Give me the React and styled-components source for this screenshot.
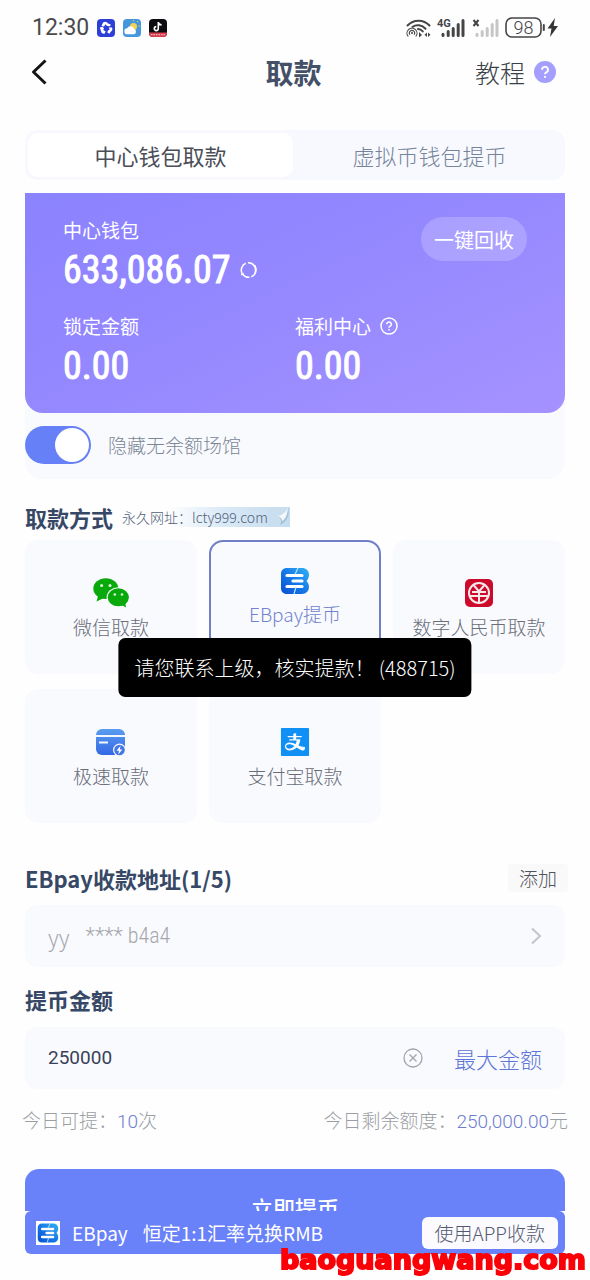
import React, { useState } from 'react';
import styled, { createGlobalStyle, css } from 'styled-components';
import { AiFillAlipaySquare } from 'react-icons/ai';

const Global = createGlobalStyle`
  *, *::before, *::after { box-sizing: border-box; }
  body {
    margin: 0;
    background: #fefefe;
    font-family: 'Noto Sans CJK SC', 'Noto Sans', sans-serif;
    font-weight: 300;
  }
  button, input { font: inherit; color: inherit; margin: 0; padding: 0; border: 0; background: none; }
  h1, h2, p { margin: 0; }
`;

const numeric = css`font-family: Roboto, 'Noto Sans CJK SC', sans-serif;`;
const narrow = css`font-family: 'Liberation Sans Narrow', 'Roboto Condensed', 'Noto Sans CJK SC', sans-serif;`;

const Page = styled.div`
  min-height: 100vh;
  display: flex;
  flex-direction: column;
`;

const StatusBar = styled.div`
  display: flex;
  align-items: center;
  justify-content: space-between;
  height: 56px;
  padding: 0 31px 0 32px;
`;
const StatusGroup = styled.div`
  display: flex;
  align-items: center;
  gap: ${p => p.$gap}px;
  svg { display: block; }
`;
const Clock = styled.span`
  ${numeric}
  font-size: 23px;
  line-height: 28px;
  font-weight: 400;
  color: #4a4a4c;
`;

const Header = styled.header`
  display: grid;
  grid-template-columns: 1fr auto 1fr;
  align-items: center;
  height: 32px;
  padding: 0 34px 0 31px;
`;
const BackButton = styled.button`
  justify-self: start;
  display: flex;
  cursor: pointer;
`;
const Title = styled.h1`
  font-size: 28px;
  line-height: 32px;
  font-weight: 700;
  color: #435067;
`;
const TutorialLink = styled.a`
  justify-self: end;
  display: flex;
  align-items: center;
  gap: 9px;
  font-size: 25px;
  line-height: 32px;
  color: #3b3f48;
  text-decoration: none;
`;

const Main = styled.main`
  display: flex;
  flex-direction: column;
  padding: 42px 25px 0;
`;

const Tabs = styled.div`
  display: grid;
  grid-template-columns: 1fr 1fr;
  height: 50px;
  padding: 3px;
  gap: 4px;
  border-radius: 12px;
  background: #f8f9fe;
`;
const Tab = styled.button`
  border-radius: 10px;
  font-size: 22px;
  line-height: 32px;
  cursor: pointer;
  font-weight: ${p => (p.$active ? 400 : 300)};
  color: ${p => (p.$active ? '#4a4e58' : '#75849a')};
  background: ${p => (p.$active ? '#ffffff' : 'transparent')};
`;

const WalletPanel = styled.section`
  margin-top: 13px;
  border-radius: 0 0 18px 18px;
  background: #f9fafe;
`;
const WalletCard = styled.div`
  display: flex;
  flex-direction: column;
  gap: 19px;
  padding: 24px 38px 23px;
  border-radius: 0 0 18px 18px;
  background: linear-gradient(155deg, #8b82fe 0%, #9488ff 45%, #a592ff 100%);
  color: #ffffff;
`;
const WalletTop = styled.div`
  display: flex;
  justify-content: space-between;
  align-items: flex-start;
`;
const WalletColumns = styled.div`
  display: grid;
  grid-template-columns: 1fr 1fr;
`;
const FigureLabel = styled.p`
  display: flex;
  align-items: center;
  gap: 9px;
  font-size: 19px;
  line-height: 26px;
  font-weight: 400;
`;
const Figure = styled.p`
  ${narrow}
  display: flex;
  align-items: center;
  gap: 9px;
  margin-top: 3px;
  font-size: 38px;
  line-height: 48px;
  font-weight: 400;
  -webkit-text-stroke: 1px #ffffff;
`;
const RefreshButton = styled.button`
  display: flex;
  cursor: pointer;
`;
const CollectButton = styled.button`
  height: 44px;
  padding: 0 13px;
  border-radius: 22px;
  background: rgba(255, 255, 255, 0.2);
  font-size: 20px;
  font-weight: 400;
  cursor: pointer;
`;
const SwitchRow = styled.label`
  display: flex;
  align-items: flex-start;
  gap: 17px;
  height: 66px;
  padding-top: 13px;
  font-size: 19px;
  line-height: 38px;
  color: #7c8796;
  cursor: pointer;
`;
const Switch = styled.input`
  appearance: none;
  display: flex;
  align-items: center;
  justify-content: flex-start;
  width: 66px;
  height: 38px;
  padding: 0 2px;
  border-radius: 19px;
  background: #c9cfdd;
  cursor: pointer;
  &::before {
    content: '';
    width: 34px;
    height: 34px;
    border-radius: 50%;
    background: #ffffff;
  }
  &:checked { background: #6681f8; justify-content: flex-end; }
`;

const SectionHead = styled.div`
  display: flex;
  align-items: center;
  justify-content: ${p => (p.$spread ? 'space-between' : 'flex-start')};
  gap: 9px;
  margin-top: ${p => p.$top}px;
`;
const SectionTitle = styled.h2`
  font-size: 22px;
  line-height: 30px;
  font-weight: 700;
  color: #374866;
`;
const SiteNote = styled.span`
  display: flex;
  align-items: center;
  font-size: 14px;
  line-height: 18px;
  color: #52627b;
  background: linear-gradient(90deg, rgba(213, 230, 244, 0) 28%, #dae9f6 60%, #c4dcef 100%);
`;

const Methods = styled.div`
  display: grid;
  grid-template-columns: repeat(3, 1fr);
  gap: 15px 12px;
  margin-top: 8px;
`;
const Method = styled.button`
  display: flex;
  flex-direction: column;
  align-items: center;
  justify-content: center;
  gap: 5px;
  height: 134px;
  padding: ${p => (p.$active ? '0 0 20px' : '4px 0 0')};
  border: ${p => (p.$active ? '2px solid #7080c8' : '0')};
  border-radius: 14px;
  background: #f9fafe;
  color: ${p => (p.$active ? '#7283cd' : '#696d78')};
  font-size: 19px;
  line-height: 28px;
  cursor: pointer;
  svg { display: block; }
`;

const AddButton = styled.button`
  margin-right: -3px;
  padding: 0 11px;
  border-radius: 4px;
  background: #f9f9fa;
  font-size: 19px;
  line-height: 28px;
  color: #50545c;
  cursor: pointer;
`;
const Field = styled.div`
  display: flex;
  align-items: center;
  height: 62px;
  margin-top: ${p => p.$top}px;
  padding: 0 23px;
  border-radius: 12px;
  background: #f9fafe;
`;
const AddressButton = styled.button`
  flex: 1;
  display: flex;
  align-items: center;
  gap: 16px;
  color: #a6a6ac;
  text-align: left;
  cursor: pointer;
  svg { margin-left: auto; }
`;
const Owner = styled.span`
  font-size: 22px;
  line-height: 32px;
`;
const Address = styled.span`
  ${narrow}
  font-size: 22px;
  line-height: 32px;
`;
const AmountInput = styled.input`
  ${numeric}
  flex: 1;
  min-width: 0;
  font-size: 19px;
  line-height: 28px;
  font-weight: 400;
  color: #39415a;
  outline: 0;
`;
const ClearButton = styled.button`
  display: flex;
  margin-right: 31px;
  cursor: pointer;
`;
const MaxButton = styled.button`
  font-size: 22px;
  line-height: 32px;
  color: #6076d6;
  cursor: pointer;
`;
const Limits = styled.div`
  display: flex;
  justify-content: space-between;
  margin: 17px -3px 0;
  font-size: 19px;
  line-height: 28px;
  color: #9b9ea5;
`;
const Value = styled.span`
  ${numeric}
  color: #6b7dcf;
`;
const Submit = styled.button`
  height: 76px;
  margin-top: 33px;
  border-radius: 14px;
  background: #6a82f9;
  color: #ffffff;
  font-size: 22px;
  font-weight: 500;
  cursor: pointer;
`;

const PromoDock = styled.aside`
  position: fixed;
  left: 0;
  right: 0;
  bottom: 0;
  padding: 0 25px 26px;
  background: #fefefe;
`;
const Promo = styled.div`
  display: flex;
  align-items: center;
  height: 43px;
  padding: 0 7px 0 11px;
  border-radius: 6px;
  background: #6a82f9;
  color: #ffffff;
  font-size: 19px;
  line-height: 28px;
  font-weight: 400;
`;
const PromoLogo = styled.span`
  display: flex;
  padding: 1px;
  margin-right: 12px;
  background: #ffffff;
`;
const PromoText = styled.p`
  flex: 1;
  display: flex;
  gap: 15px;
`;
const PromoButton = styled.button`
  padding: 0 13px;
  height: 32px;
  border-radius: 6px;
  background: #fafaff;
  color: #555b6e;
  font-weight: 300;
  cursor: pointer;
`;

const Toast = styled.div`
  position: fixed;
  top: 638px;
  left: 50%;
  transform: translateX(-50%);
  padding: 15px 16px 14px;
  border-radius: 7px;
  background: #000000;
  color: #ffffff;
  font-size: 20px;
  line-height: 30px;
  white-space: nowrap;
`;
const Watermark = styled.div`
  position: fixed;
  right: 4px;
  bottom: 4px;
  font-family: 'DejaVu Sans', sans-serif;
  font-size: 27px;
  line-height: 32px;
  font-weight: 700;
  color: #fb0007;
  -webkit-text-stroke: 2px #fb0007;
`;

const SwirlApp = () => (
  <svg width="18" height="18" viewBox="0 0 18 18">
    <rect width="18" height="18" rx="4" fill="#2d3fd6" />
    <g fill="#fff">
      <path d="M6 3.5c2-1.500 4-.8 5 1l2.600.8-.4 2-3.200-.3L8.500 5.300 7 7.600 4.500 7z" />
      <path d="M2.800 8.500l3-.7 1.200 2-.9 1.200 2.500 1.300-1 2.400c-2 .3-3.600-.8-3.600-2.600z" />
      <path d="M15 8.600c.9 1.800.2 3.400-1.300 4.100l-1.200 2.100-2.200-1.200.6-2.200 1.700-.6-.8-2.200z" />
    </g>
  </svg>
);
const WeatherApp = () => (
  <svg width="18" height="18" viewBox="0 0 18 18">
    <rect width="18" height="18" rx="4" fill="#4597dc" />
    <circle cx="10.500" cy="7.500" r="3.500" fill="#f6d154" />
    <path d="M14 3l1-.8M15.500 7h1.300M10.500 2.300v-1" stroke="#f6d154" />
    <path d="M4.500 15.300a3 3 0 0 1-.3-6 3.800 3.800 0 0 1 7 .7 2.800 2.800 0 0 1-.2 5.300z" fill="#fff" />
  </svg>
);
const NoteApp = () => (
  <svg width="18" height="18" viewBox="0 0 18 18">
    <rect width="18" height="18" rx="4" fill="#0b0b10" />
    <path d="M9.300 3v6.600a2 2 0 1 1-2-2M9.300 3.200c.4 1.600 1.600 2.600 3.300 2.700" fill="none" stroke="#fff" strokeWidth="1.600" />
    <path d="M0 13.500h18v.5a4 4 0 0 1-4 4H4a4 4 0 0 1-4-4z" fill="#d8404f" />
    <path d="M2 15.700h14" stroke="#f6c6ca" strokeDasharray="1.500 1" />
  </svg>
);
const WifiIcon = () => (
  <svg width="25" height="19" viewBox="0 0 25 19" fill="none" stroke="#454547">
    <path d="M1.500 6.500C7.500 0 17.500 0 23.500 6.500" strokeWidth="2" strokeLinecap="round" />
    <path d="M6.500 7.800c4-2.700 9.500-1.800 13 2" strokeWidth="2" strokeLinecap="round" />
    <path d="M12 10c1.800.1 3.500 1 4.800 2.400" strokeWidth="2" strokeLinecap="round" />
    <path d="M2.300 17.500a5 5 0 1 1 7.400 0M4 15.700a2.600 2.600 0 1 1 4 0" strokeWidth="1.100" />
    <circle cx="6" cy="14" r="1" fill="#454547" stroke="none" />
    <path d="M13 13l3 3-3 2.500zM21 13.500v4.500l-2.500-2.200zM22 13.500v4.500l2.500-2.200z" fill="#454547" stroke="none" />
  </svg>
);
const SignalIcon = ({ color, tag }) => (
  <svg width="28" height="20" viewBox="0 0 28 20">
    <g stroke={color} strokeWidth="3" strokeLinecap="round">
      <path d="M6 16.200v1.300M11.200 13.500v4M16.200 10.500v7M21.200 6.500v11M26 2.500v15" />
    </g>
    {tag === '4G' ? (
      <text x="0" y="9" fontFamily="Roboto, sans-serif" fontSize="11" fontWeight="700" fill="#454547">4G</text>
    ) : (
      <path d="M2.500 2l5 6M7.500 2l-5 6" stroke="#454547" strokeWidth="2" />
    )}
  </svg>
);
const BatteryIcon = () => (
  <svg width="54" height="22" viewBox="0 0 54 22">
    <rect x="1" y="1" width="35" height="19" rx="6" fill="none" stroke="#454547" strokeWidth="1.600" />
    <text x="18.500" y="17" textAnchor="middle" fontFamily="Roboto, sans-serif" fontSize="18" fill="#454547">98</text>
    <path d="M38.800 8v5" stroke="#454547" strokeWidth="2" strokeLinecap="round" />
    <path d="M50 1l-7.500 10.500h4L45 20l8-11h-4.300z" fill="#353537" />
  </svg>
);
const BackIcon = () => (
  <svg width="16" height="26" viewBox="0 0 16 26" fill="none" stroke="#141414" strokeWidth="3">
    <path d="M14.500 1.500L2.500 13l12 11.500" strokeLinejoin="round" />
  </svg>
);
const HelpDot = () => (
  <svg width="22" height="22" viewBox="0 0 22 22">
    <circle cx="11" cy="11" r="11" fill="#a49fff" />
    <path d="M8 8.800a3 2.900 0 1 1 4.300 2.500c-1 .5-1.300.9-1.300 1.900M11 15v1.800" fill="none" stroke="#fff" strokeWidth="1.900" />
  </svg>
);
const HelpRing = () => (
  <svg width="18" height="18" viewBox="0 0 18 18" fill="none" stroke="#fff">
    <circle cx="9" cy="9" r="8" strokeWidth="1.500" />
    <path d="M6.700 7.200a2.300 2.200 0 1 1 3.300 2c-.8.400-1 .8-1 1.500M9 12v1.500" strokeWidth="1.500" />
  </svg>
);
const RefreshIcon = () => (
  <svg width="17" height="18" viewBox="0 0 17 18" fill="none" stroke="#fff" strokeWidth="1.500">
    <path d="M2.500 13.200A7 7.300 0 0 1 5.800 2.300M8 1.700a7 7.300 0 0 1 7 10" />
    <path d="M14.800 4.800a7 7.300 0 0 1-3.600 11M9.500 16.300a7 7.300 0 0 1-6.500-3M1 13.500l3-.5M16 5l-2.500 0" />
  </svg>
);
const CurlIcon = () => (
  <svg width="22" height="20" viewBox="0 0 22 20">
    <path d="M0 1h15l5-1c1 7-1 14-8 19H0z" fill="#c9dff0" />
    <path d="M9 9l7 .5L20 0c2 8-1 15-8 18 2-4 1-7-3-9z" fill="#a7c2d6" />
    <path d="M9 9c4 0 9-3 11-9-.5 7-2 12-6 14 0-3-2-4-5-5z" fill="#f2f8fc" />
  </svg>
);
const WechatIcon = () => (
  <svg width="36" height="30" viewBox="0 0 36 30">
    <path d="M5 18l-1.500 5.500L11 20z" fill="#08aa0b" />
    <ellipse cx="12.800" cy="10.600" rx="12.500" ry="10.400" fill="#08aa0b" />
    <ellipse cx="25.300" cy="19.300" rx="11.700" ry="10" fill="#f9fafe" />
    <path d="M27 26l6 3.500-1-6z" fill="#08aa0b" />
    <ellipse cx="25.300" cy="19.300" rx="10.600" ry="9" fill="#08aa0b" />
    <g fill="#d9f5da">
      <circle cx="8.600" cy="7.600" r="1.500" /><circle cx="17" cy="7.600" r="1.500" />
      <circle cx="21.800" cy="16.500" r="1.300" /><circle cx="29" cy="16.500" r="1.300" />
    </g>
  </svg>
);
const EbIcon = ({ width = 30, height = 28, id }) => (
  <svg width={width} height={height} viewBox="0 0 30 28">
    <defs>
      <linearGradient id={id} x1="0" y1="1" x2="1" y2="0">
        <stop offset="0" stopColor="#0a4fd0" />
        <stop offset=".5" stopColor="#1479e8" />
        <stop offset="1" stopColor="#35b4f4" />
      </linearGradient>
    </defs>
    <path d="M7 1h15c4 0 7 2.500 7 6.500 0 3-1 5-2.500 6.500C28 15.500 29 17 29 20c0 4-3 7-7 7H7c-4 0-6-2.500-6-6V7c0-3.500 2-6 6-6z" fill={`url(#${id})`} />
    <path d="M7 8.500h15M13 14h9M7 19.500h15" stroke="#fff" strokeWidth="3.200" strokeLinecap="round" />
    <path d="M18 1l-3 6.500M16 20l-2 7" stroke="#bfe4ff" strokeWidth="1.200" />
  </svg>
);
const DigitalYuanIcon = () => (
  <svg width="30" height="30" viewBox="0 0 30 30">
    <rect x="1" y="1" width="28" height="28" rx="5" fill="#cb0a2c" />
    <g fill="none" stroke="#fbe9ea" strokeWidth="2">
      <circle cx="15" cy="15" r="10" />
      <path d="M10 7.500l5 6 5-6M8 14h14M6 18h18M15 13v12" />
    </g>
  </svg>
);
const CardIcon = () => (
  <svg width="30" height="30" viewBox="0 0 30 30">
    <defs>
      <linearGradient id="card" x1="0" y1="0" x2="0" y2="1">
        <stop offset="0" stopColor="#5a9cf0" />
        <stop offset="1" stopColor="#3468e4" />
      </linearGradient>
    </defs>
    <rect x="0" y="2" width="29" height="26" rx="6" fill="url(#card)" />
    <path d="M0 9h29M3 15.500h9" stroke="#f3f7ff" strokeWidth="2" />
    <circle cx="23.500" cy="23" r="6.500" fill="#f9fafe" />
    <circle cx="23.500" cy="23" r="5.300" fill="#4476e6" />
    <path d="M24.500 18.800l-4 5h2.500l-.7 3.700 4-5h-2.500z" fill="#fff" />
  </svg>
);
const ChevronIcon = () => (
  <svg width="12" height="18" viewBox="0 0 12 18" fill="none" stroke="#c3c5cc" strokeWidth="2">
    <path d="M2 1.500L10 9l-8 7.500" />
  </svg>
);
const ClearIcon = () => (
  <svg width="20" height="20" viewBox="0 0 20 20" fill="none" stroke="#a1a4ac" strokeWidth="1.300">
    <circle cx="10" cy="10" r="9" />
    <path d="M6.500 6.500l7 7M13.500 6.500l-7 7" />
  </svg>
);

const METHODS = [
  { id: 'wechat', label: '微信取款', icon: <WechatIcon /> },
  { id: 'ebpay', label: 'EBpay提币', icon: <EbIcon id="eb-method" /> },
  { id: 'ecny', label: '数字人民币取款', icon: <DigitalYuanIcon /> },
  { id: 'fast', label: '极速取款', icon: <CardIcon /> },
  { id: 'alipay', label: '支付宝取款', icon: <AiFillAlipaySquare size={36} color="#1090f4" style={{ margin: -3 }} /> },
];

export default function App() {
  const [tab, setTab] = useState(0);
  const [method, setMethod] = useState('ebpay');
  const [amount, setAmount] = useState('250000');
  return (
    <Page>
      <Global />
      <StatusBar>
        <StatusGroup $gap={8}>
          <Clock>12:30</Clock>
          <SwirlApp />
          <WeatherApp />
          <NoteApp />
        </StatusGroup>
        <StatusGroup $gap={6}>
          <WifiIcon />
          <SignalIcon color="#454547" tag="4G" />
          <SignalIcon color="#c6c6c8" tag="x" />
          <BatteryIcon />
        </StatusGroup>
      </StatusBar>
      <Header>
        <BackButton aria-label="返回"><BackIcon /></BackButton>
        <Title>取款</Title>
        <TutorialLink href="#tutorial">教程<HelpDot /></TutorialLink>
      </Header>
      <Main>
        <Tabs>
          {['中心钱包取款', '虚拟币钱包提币'].map((name, i) => (
            <Tab key={name} $active={tab === i} onClick={() => setTab(i)}>{name}</Tab>
          ))}
        </Tabs>

        <WalletPanel>
          <WalletCard>
            <WalletTop>
              <div>
                <FigureLabel>中心钱包</FigureLabel>
                <Figure>633,086.07<RefreshButton aria-label="刷新"><RefreshIcon /></RefreshButton></Figure>
              </div>
              <CollectButton>一键回收</CollectButton>
            </WalletTop>
            <WalletColumns>
              <div>
                <FigureLabel>锁定金额</FigureLabel>
                <Figure>0.00</Figure>
              </div>
              <div>
                <FigureLabel>福利中心<HelpRing /></FigureLabel>
                <Figure>0.00</Figure>
              </div>
            </WalletColumns>
          </WalletCard>
          <SwitchRow>
            <Switch type="checkbox" role="switch" defaultChecked />
            隐藏无余额场馆
          </SwitchRow>
        </WalletPanel>

        <SectionHead $top={23}>
          <SectionTitle>取款方式</SectionTitle>
          <SiteNote>永久网址：lcty999.com<CurlIcon /></SiteNote>
        </SectionHead>
        <Methods>
          {METHODS.map(m => (
            <Method key={m.id} $active={method === m.id} onClick={() => setMethod(m.id)}>
              {m.icon}
              {m.label}
            </Method>
          ))}
        </Methods>

        <SectionHead $top={40} $spread>
          <SectionTitle>EBpay收款地址(1/5)</SectionTitle>
          <AddButton>添加</AddButton>
        </SectionHead>
        <Field $top={12}>
          <AddressButton>
            <Owner>yy</Owner>
            <Address>**** b4a4</Address>
            <ChevronIcon />
          </AddressButton>
        </Field>

        <SectionHead $top={17}>
          <SectionTitle as="label" htmlFor="amount">提币金额</SectionTitle>
        </SectionHead>
        <Field $top={13}>
          <AmountInput id="amount" inputMode="decimal" value={amount} onChange={e => setAmount(e.target.value)} />
          <ClearButton aria-label="清除" onClick={() => setAmount('')}><ClearIcon /></ClearButton>
          <MaxButton onClick={() => setAmount('250000')}>最大金额</MaxButton>
        </Field>
        <Limits>
          <span>今日可提：<Value>10</Value>次</span>
          <span>今日剩余额度：<Value>250,000.00</Value>元</span>
        </Limits>
        <Submit>立即提币</Submit>
      </Main>

      <PromoDock>
        <Promo>
          <PromoLogo><EbIcon id="eb-promo" width={22} height={22} /></PromoLogo>
          <PromoText><span>EBpay</span><span>恒定1:1汇率兑换RMB</span></PromoText>
          <PromoButton>使用APP收款</PromoButton>
        </Promo>
      </PromoDock>
      <Toast role="status">请您联系上级，核实提款！ (488715)</Toast>
      <Watermark>baoguangwang.com</Watermark>
    </Page>
  );
}
